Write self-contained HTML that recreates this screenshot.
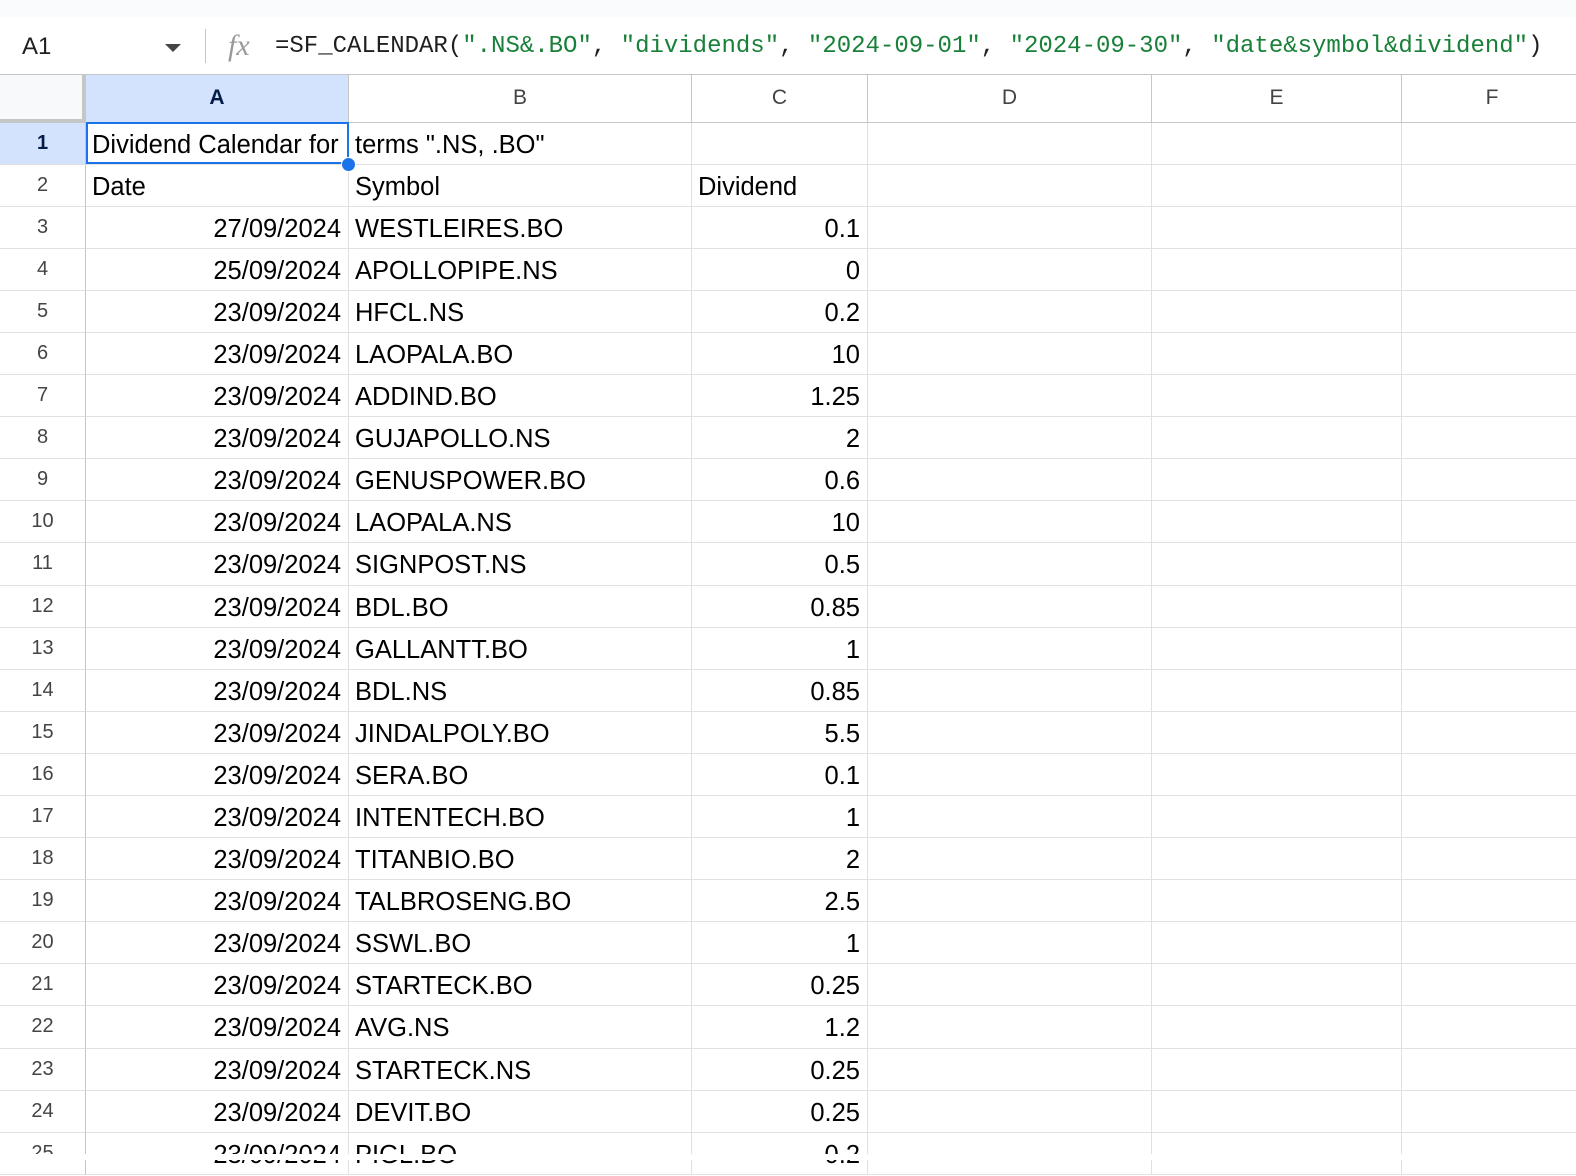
<!DOCTYPE html>
<html><head><meta charset="utf-8"><style>
*{box-sizing:border-box;margin:0;padding:0}
body{width:1576px;height:1160px;overflow:hidden;background:#fff;font-family:"Liberation Sans",Arial,sans-serif;position:relative}
.top{position:absolute;left:0;top:0;width:1576px;height:17px;background:#f9fbfd}
.fbar{position:absolute;left:0;top:17px;width:1576px;height:58px;background:#fff;border-bottom:1px solid #c4c7c5}
.nb{position:absolute;left:22px;top:16px;font-size:24px;color:#1f1f1f}
.dd{position:absolute;left:165px;top:27px;width:0;height:0;border-left:8px solid transparent;border-right:8px solid transparent;border-top:8px solid #444}
.sep{position:absolute;left:205px;top:12px;width:1px;height:34px;background:#c4c7c5}
.fx{position:absolute;left:228px;top:12px;font-family:"Liberation Serif",serif;font-style:italic;font-size:30px;color:#999}
.ft{position:absolute;left:275px;top:16px;font-family:"Liberation Mono",monospace;font-size:24px;color:#1f1f1f;white-space:pre}
.g{color:#188038}
.grid{position:absolute;left:0;top:75px;display:grid;grid-template-columns:86px 263px 343px 176px 284px 250px 181px;grid-template-rows:47.5px repeat(25,42.1px)}
.grid div{border-right:1px solid #e1e1e1;border-bottom:1px solid #e1e1e1;font-size:25.5px;color:#000;white-space:nowrap;overflow:visible;line-height:41px;padding:2px 6px 0}
.grid .h{border-color:#c4c7c5;color:#444;font-size:21px;text-align:center;line-height:45px;padding:0}
.grid .rh{border-right:1px solid #c4c7c5;color:#444;font-size:20px;text-align:center;padding:0;line-height:41px}
.grid .r{text-align:right;padding-right:7px}
.grid .sel{background:#d3e3fd;font-weight:bold;color:#041e49}
.corner{background:#f8f9fa;border-right:4px solid #c4c7c5!important;border-bottom:4px solid #c4c7c5!important}
.a1{position:absolute;left:86px;top:122px;width:263px;height:42px;border:2px solid #1a73e8;pointer-events:none}
.dot{position:absolute;left:341px;top:157px;width:15px;height:15px;border-radius:50%;background:#1a73e8;border:1px solid #fff}
</style></head><body>
<div class="top"></div>
<div class="fbar"><div class="nb">A1</div><div class="dd"></div><div class="sep"></div><div class="fx">fx</div>
<div class="ft">=SF_CALENDAR(<span class="g">".NS&amp;.BO"</span>, <span class="g">"dividends"</span>, <span class="g">"2024-09-01"</span>, <span class="g">"2024-09-30"</span>, <span class="g">"date&amp;symbol&amp;dividend"</span>)</div></div>
<div class="grid">
<div class="h corner"></div><div class="h sel">A</div><div class="h">B</div><div class="h">C</div><div class="h">D</div><div class="h">E</div><div class="h">F</div>
<div class="rh sel">1</div><div style="overflow:hidden">Dividend Calendar for</div><div>terms ".NS, .BO"</div><div></div><div></div><div></div><div></div>
<div class="rh">2</div><div>Date</div><div>Symbol</div><div>Dividend</div><div></div><div></div><div></div>
<div class="rh">3</div><div class="r">27/09/2024</div><div>WESTLEIRES.BO</div><div class="r">0.1</div><div></div><div></div><div></div>
<div class="rh">4</div><div class="r">25/09/2024</div><div>APOLLOPIPE.NS</div><div class="r">0</div><div></div><div></div><div></div>
<div class="rh">5</div><div class="r">23/09/2024</div><div>HFCL.NS</div><div class="r">0.2</div><div></div><div></div><div></div>
<div class="rh">6</div><div class="r">23/09/2024</div><div>LAOPALA.BO</div><div class="r">10</div><div></div><div></div><div></div>
<div class="rh">7</div><div class="r">23/09/2024</div><div>ADDIND.BO</div><div class="r">1.25</div><div></div><div></div><div></div>
<div class="rh">8</div><div class="r">23/09/2024</div><div>GUJAPOLLO.NS</div><div class="r">2</div><div></div><div></div><div></div>
<div class="rh">9</div><div class="r">23/09/2024</div><div>GENUSPOWER.BO</div><div class="r">0.6</div><div></div><div></div><div></div>
<div class="rh">10</div><div class="r">23/09/2024</div><div>LAOPALA.NS</div><div class="r">10</div><div></div><div></div><div></div>
<div class="rh">11</div><div class="r">23/09/2024</div><div>SIGNPOST.NS</div><div class="r">0.5</div><div></div><div></div><div></div>
<div class="rh">12</div><div class="r">23/09/2024</div><div>BDL.BO</div><div class="r">0.85</div><div></div><div></div><div></div>
<div class="rh">13</div><div class="r">23/09/2024</div><div>GALLANTT.BO</div><div class="r">1</div><div></div><div></div><div></div>
<div class="rh">14</div><div class="r">23/09/2024</div><div>BDL.NS</div><div class="r">0.85</div><div></div><div></div><div></div>
<div class="rh">15</div><div class="r">23/09/2024</div><div>JINDALPOLY.BO</div><div class="r">5.5</div><div></div><div></div><div></div>
<div class="rh">16</div><div class="r">23/09/2024</div><div>SERA.BO</div><div class="r">0.1</div><div></div><div></div><div></div>
<div class="rh">17</div><div class="r">23/09/2024</div><div>INTENTECH.BO</div><div class="r">1</div><div></div><div></div><div></div>
<div class="rh">18</div><div class="r">23/09/2024</div><div>TITANBIO.BO</div><div class="r">2</div><div></div><div></div><div></div>
<div class="rh">19</div><div class="r">23/09/2024</div><div>TALBROSENG.BO</div><div class="r">2.5</div><div></div><div></div><div></div>
<div class="rh">20</div><div class="r">23/09/2024</div><div>SSWL.BO</div><div class="r">1</div><div></div><div></div><div></div>
<div class="rh">21</div><div class="r">23/09/2024</div><div>STARTECK.BO</div><div class="r">0.25</div><div></div><div></div><div></div>
<div class="rh">22</div><div class="r">23/09/2024</div><div>AVG.NS</div><div class="r">1.2</div><div></div><div></div><div></div>
<div class="rh">23</div><div class="r">23/09/2024</div><div>STARTECK.NS</div><div class="r">0.25</div><div></div><div></div><div></div>
<div class="rh">24</div><div class="r">23/09/2024</div><div>DEVIT.BO</div><div class="r">0.25</div><div></div><div></div><div></div>
<div class="rh">25</div><div class="r">23/09/2024</div><div>PIGL.BO</div><div class="r">0.2</div><div></div><div></div><div></div>
</div>
<div class="a1"></div><div class="dot"></div>
<div style="position:absolute;left:0;top:1154px;width:1576px;height:6px;background:#fff"></div>
</body></html>
